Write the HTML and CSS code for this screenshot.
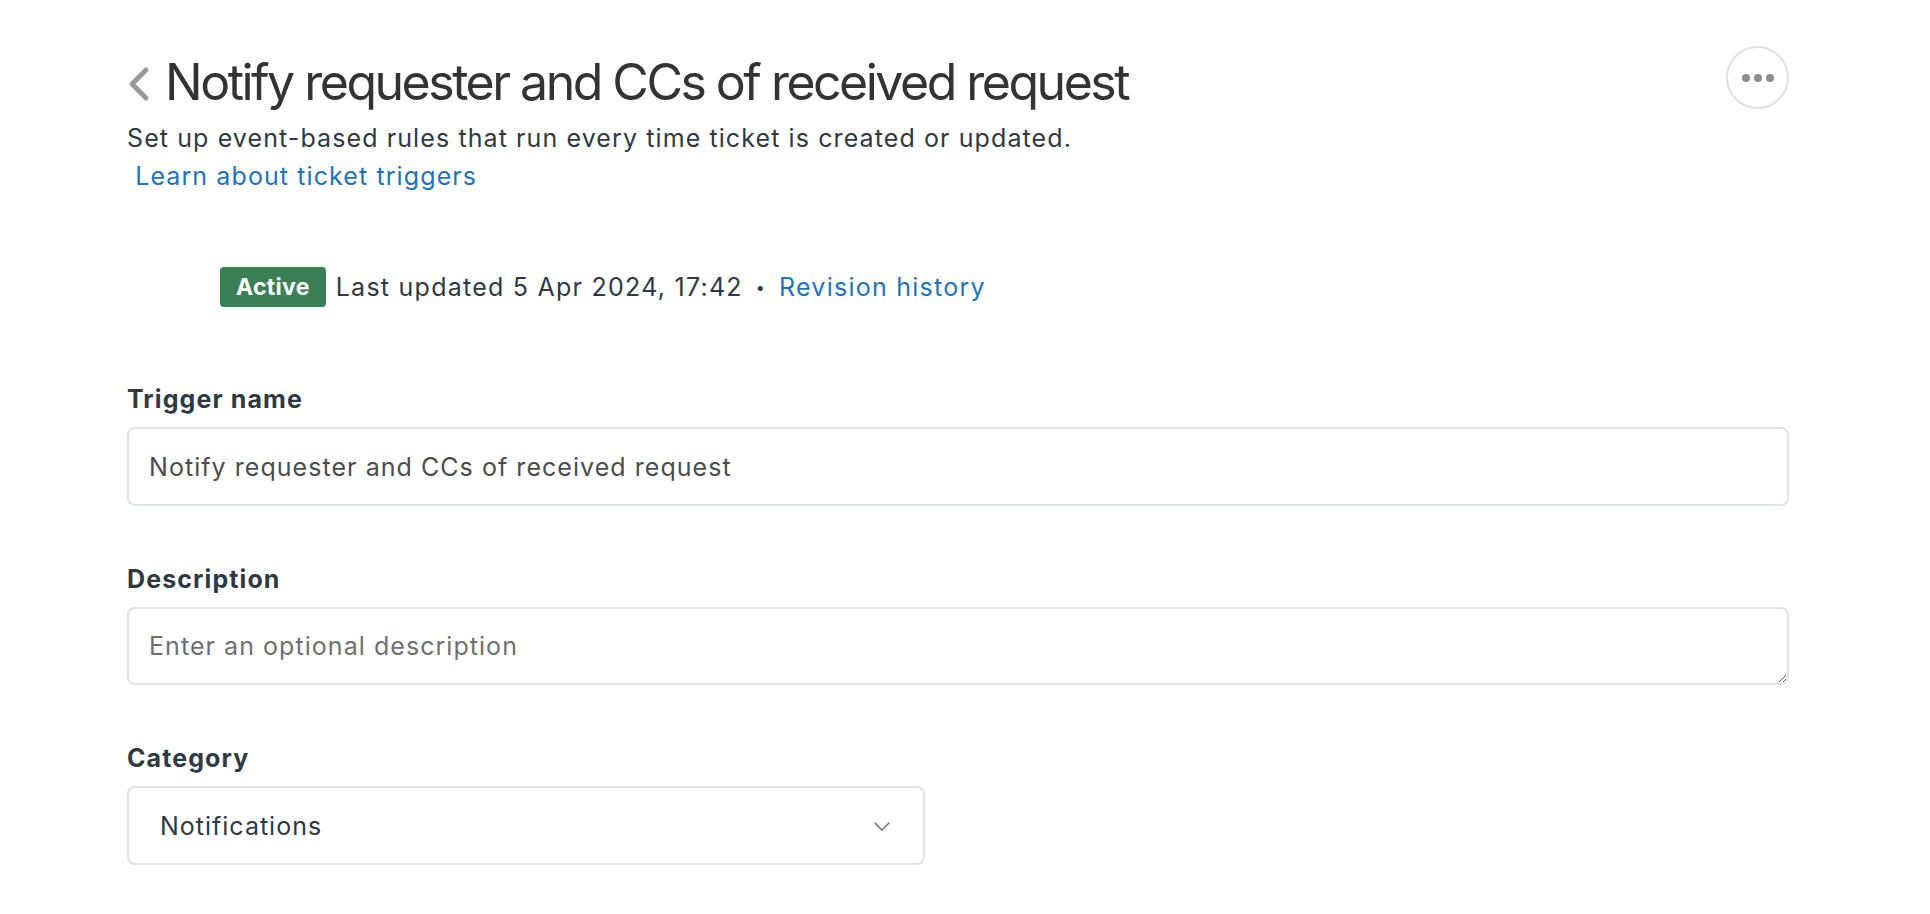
FILE: index.html
```html
<!DOCTYPE html>
<html lang="en">
<head>
<meta charset="utf-8">
<title>Notify requester and CCs of received request</title>
<link rel="stylesheet" href="styles.css">
</head>
<body>
<main class="page">
  <header class="header">
    <div class="header-main">
      <div class="title-row">
        <a class="back" href="#" aria-label="Back">
          <svg width="24" height="36" viewBox="0 0 24 36" aria-hidden="true">
            <path d="M19 4 L5 18 L19 32" fill="none" stroke="#9a9a9a" stroke-width="5" stroke-linecap="round" stroke-linejoin="round"/>
          </svg>
        </a>
        <h1 class="title">Notify requester and CCs of received request</h1>
      </div>
      <p class="subtitle">Set up event-based rules that run every time ticket is created or updated.<br>&nbsp;<a class="link" href="#">Learn about ticket triggers</a></p>
    </div>
    <button class="more" type="button" aria-label="More options">
      <span class="dot"></span><span class="dot"></span><span class="dot"></span>
    </button>
  </header>

  <div class="status">
    <span class="badge">Active</span>
    <span class="status-text">Last updated 5 Apr 2024, 17:42</span>
    <span class="sep">•</span>
    <a class="link" href="#">Revision history</a>
  </div>

  <form class="form">
    <div class="field">
      <label class="label" for="name">Trigger name</label>
      <input class="input" id="name" type="text" value="Notify requester and CCs of received request">
    </div>
    <div class="field">
      <label class="label" for="desc">Description</label>
      <textarea class="input textarea" id="desc" placeholder="Enter an optional description"></textarea>
    </div>
    <div class="field">
      <label class="label">Category</label>
      <div class="select">
        <span class="select-value">Notifications</span>
        <svg class="select-chevron" width="18" height="12" viewBox="0 0 18 12" aria-hidden="true">
          <path d="M2 3 L9 10 L16 3" fill="none" stroke="#68737d" stroke-width="1.5" stroke-linecap="round" stroke-linejoin="round"/>
        </svg>
      </div>
    </div>
  </form>
</main>
</body>
</html>
```
FILE: styles.css
```css
* { box-sizing: border-box; }

html, body {
  margin: 0;
  padding: 0;
  background: #ffffff;
}

body {
  font-family: Inter, "Noto Sans", "Liberation Sans", sans-serif;
  color: #2f3941;
}

.page {
  padding: 46px 141px 0 127px;
}

.header {
  display: flex;
  justify-content: space-between;
  align-items: flex-start;
}

.title-row {
  display: flex;
  align-items: center;
  gap: 14px;
  margin-top: 6px;
}

.back {
  display: flex;
  width: 24px;
  height: 36px;
  margin-top: 4px;
}

.title {
  margin: 0;
  font-size: 50px;
  font-weight: 400;
  line-height: 60px;
  color: #333333;
  letter-spacing: -2.5px;
}

.subtitle {
  margin: 7px 0 0;
  font-size: 25px;
  line-height: 38px;
  letter-spacing: 1.1px;
  color: #2f3941;
}

.link {
  color: #1f73b7;
  text-decoration: none;
}

.more {
  width: 63px;
  height: 63px;
  border-radius: 50%;
  border: 2px solid #e0e0e0;
  background: #fff;
  display: flex;
  align-items: center;
  justify-content: center;
  gap: 4px;
  padding: 0;
  margin-right: 0;
}

.dot {
  width: 8px;
  height: 8px;
  border-radius: 50%;
  background: #8c8c8c;
}

.status {
  display: flex;
  align-items: center;
  margin: 72px 0 0 93px;
  font-size: 25px;
  line-height: 40px;
  letter-spacing: 1.25px;
}

.badge {
  display: inline-flex;
  align-items: center;
  height: 40px;
  padding: 0 16px;
  border-radius: 4px;
  background: #3a7f55;
  color: #ffffff;
  font-weight: 700;
  font-size: 23px;
  letter-spacing: 0.3px;
  margin-right: 10px;
}

.status-text {
  color: #2f3941;
}

.sep {
  margin: 0 13px;
  font-size: 16px;
}

.form {
  margin-top: 77px;
}

.field {
  margin-bottom: 58px;
}

.label {
  display: block;
  font-size: 25px;
  font-weight: 700;
  line-height: 30px;
  letter-spacing: 1.1px;
  margin-bottom: 13px;
  color: #2f3941;
}

.input {
  display: block;
  width: 100%;
  height: 79px;
  border: 2px solid #e0e3e6;
  border-radius: 8px;
  padding: 0 20px;
  font-family: inherit;
  font-size: 25px;
  letter-spacing: 1.05px;
  color: #4c4c4c;
  background: #fff;
  outline: none;
}

.textarea {
  height: 78px;
  padding-top: 20px;
  line-height: 34px;
  resize: vertical;
}

.textarea::placeholder {
  color: #6f6f6f;
}

.select {
  display: flex;
  align-items: center;
  justify-content: space-between;
  width: 798px;
  height: 79px;
  border: 2px solid #e0e3e6;
  border-radius: 8px;
  padding: 0 32px 0 31px;
  font-size: 25px;
  letter-spacing: 1px;
  color: #2f3941;
}
```
